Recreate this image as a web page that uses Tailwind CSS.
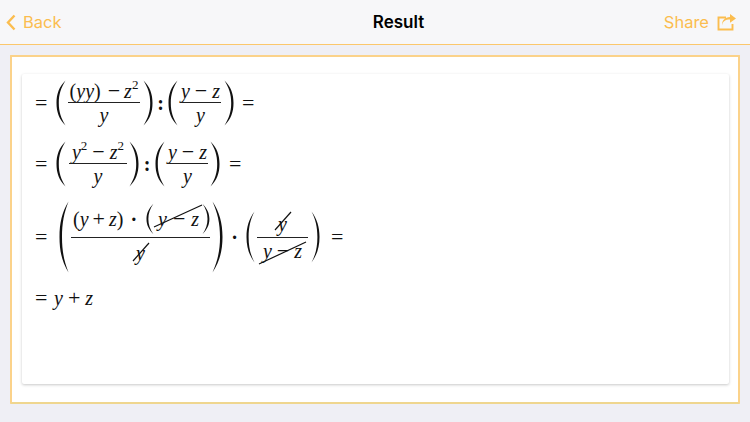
<!DOCTYPE html>
<html lang="en">
<head>
  <meta charset="UTF-8">
  <meta name="viewport" content="width=device-width, initial-scale=1.0">
  <script src="https://cdn.jsdelivr.net/npm/@tailwindcss/browser@4"></script>
  <title>Result</title>
</head>
<body class="bg-[#efeff5]">
  <div class="w-[750px] h-[422px] overflow-hidden flex flex-col font-['Inter','Liberation_Sans',sans-serif]">
    <!-- nav bar -->
    <div class="h-[45px] shrink-0 bg-[#f7f7f9] border-b border-[#fbc76c] flex items-center justify-between pl-[6px] pr-[13px] pt-[1px]">
      <div class="w-[204px] flex items-center gap-[7px] text-[#fbbd4f] text-[16.5px]">
        <svg width="10" height="17" viewBox="0 0 10 17" fill="none"><path d="M8.5 1.5 L2 8.5 L8.5 15.5" stroke="#fbbd4f" stroke-width="2.4"/></svg>
        <span>Back</span>
      </div>
      <div class="text-[17px] font-semibold text-black">Result</div>
      <div class="w-[150px] flex items-center justify-end gap-[8px] text-[#fbbd4f] text-[16.5px]">
        <span>Share</span>
        <svg width="20" height="17" viewBox="0 0 20 17" fill="none">
          <path d="M9 3.5 H1.5 V15.5 H15.5 V10" stroke="#fbbd4f" stroke-width="1.9"/>
          <path d="M5 11.5 C5.5 7.5 8.5 5.6 13 5.6 V8.8 L19 4.4 L13 0 V3 C8 3 4.8 6.5 5 11.5 Z" fill="#fbbd4f"/>
        </svg>
      </div>
    </div>

    <!-- outer card -->
    <div class="mt-[10px] ml-[10px] w-[730px] h-[349px] bg-white border-2 border-[#fbd28a] border-b-[#efd68f] rounded-[1px] pl-[10px] pt-[17px]">
      <!-- inner card -->
      <div class="w-[707px] h-[310px] bg-white rounded-[2px] shadow-[0_1px_3px_rgba(0,0,0,0.22)] pl-[13px] flex flex-col font-['Liberation_Serif',serif] text-[20px] leading-none text-[#111]">

        <!-- line 1 -->
        <div class="h-[46px] mt-[6px] flex items-center">
          <span class="w-[12px] text-center text-[22px]">=</span>
          <svg class="ml-[9px]" width="10" height="46" viewBox="0 0 10 46"><path d="M9.5 0.5 C3 7 0.5 14 0.5 23 C0.5 32 3 39 9.5 45.5 C5 38 2.8 32 2.8 23 C2.8 14 5 8 9.5 0.5 Z" fill="#111"/></svg>
          <div class="ml-[2px] w-[72px] flex flex-col items-center">
            <div class="h-[22px] flex items-center"><span>(<i>yy</i>)</span><span class="ml-[7px] text-[22px]">−</span><i class="ml-[4px]">z</i><sup class="text-[13px]">2</sup></div>
            <div class="w-full h-px bg-[#222]"></div>
            <i class="h-[23px] flex items-center">y</i>
          </div>
          <svg class="ml-[3px]" width="10" height="46" viewBox="0 0 10 46"><path d="M0.5 0.5 C7 7 9.5 14 9.5 23 C9.5 32 7 39 0.5 45.5 C5 38 7.2 32 7.2 23 C7.2 14 5 8 0.5 0.5 Z" fill="#111"/></svg>
          <span class="w-[15px] text-center font-bold">:</span>
          <svg width="10" height="46" viewBox="0 0 10 46"><path d="M9.5 0.5 C3 7 0.5 14 0.5 23 C0.5 32 3 39 9.5 45.5 C5 38 2.8 32 2.8 23 C2.8 14 5 8 9.5 0.5 Z" fill="#111"/></svg>
          <div class="ml-[2px] w-[41px] flex flex-col items-center">
            <div class="h-[22px] flex items-center"><i>y</i><span class="mx-[5px] text-[22px]">−</span><i>z</i></div>
            <div class="w-full h-px bg-[#222]"></div>
            <i class="h-[23px] flex items-center">y</i>
          </div>
          <svg class="ml-[3px]" width="10" height="46" viewBox="0 0 10 46"><path d="M0.5 0.5 C7 7 9.5 14 9.5 23 C9.5 32 7 39 0.5 45.5 C5 38 7.2 32 7.2 23 C7.2 14 5 8 0.5 0.5 Z" fill="#111"/></svg>
          <span class="ml-[8px] w-[12px] text-center text-[22px]">=</span>
        </div>

        <!-- line 2 -->
        <div class="h-[46px] mt-[15px] flex items-center">
          <span class="w-[12px] text-center text-[22px]">=</span>
          <svg class="ml-[9px]" width="10" height="46" viewBox="0 0 10 46"><path d="M9.5 0.5 C3 7 0.5 14 0.5 23 C0.5 32 3 39 9.5 45.5 C5 38 2.8 32 2.8 23 C2.8 14 5 8 9.5 0.5 Z" fill="#111"/></svg>
          <div class="ml-[3px] w-[58px] flex flex-col items-center">
            <div class="h-[22px] flex items-center"><i>y</i><sup class="text-[13px]">2</sup><span class="mx-[5px] text-[22px]">−</span><i>z</i><sup class="text-[13px]">2</sup></div>
            <div class="w-full h-px bg-[#222]"></div>
            <i class="h-[23px] flex items-center">y</i>
          </div>
          <svg class="ml-[2px]" width="10" height="46" viewBox="0 0 10 46"><path d="M0.5 0.5 C7 7 9.5 14 9.5 23 C9.5 32 7 39 0.5 45.5 C5 38 7.2 32 7.2 23 C7.2 14 5 8 0.5 0.5 Z" fill="#111"/></svg>
          <span class="w-[16px] text-center font-bold">:</span>
          <svg width="10" height="46" viewBox="0 0 10 46"><path d="M9.5 0.5 C3 7 0.5 14 0.5 23 C0.5 32 3 39 9.5 45.5 C5 38 2.8 32 2.8 23 C2.8 14 5 8 9.5 0.5 Z" fill="#111"/></svg>
          <div class="ml-[2px] w-[41px] flex flex-col items-center">
            <div class="h-[22px] flex items-center"><i>y</i><span class="mx-[5px] text-[22px]">−</span><i>z</i></div>
            <div class="w-full h-px bg-[#222]"></div>
            <i class="h-[23px] flex items-center">y</i>
          </div>
          <svg class="ml-[2px]" width="10" height="46" viewBox="0 0 10 46"><path d="M0.5 0.5 C7 7 9.5 14 9.5 23 C9.5 32 7 39 0.5 45.5 C5 38 7.2 32 7.2 23 C7.2 14 5 8 0.5 0.5 Z" fill="#111"/></svg>
          <span class="ml-[9px] w-[12px] text-center text-[22px]">=</span>
        </div>

        <!-- line 3 -->
        <div class="h-[74px] mt-[13px] flex items-center">
          <span class="w-[12px] text-center text-[22px]">=</span>
          <svg class="ml-[12px]" width="10" height="72" viewBox="0 0 10 72"><path d="M9.5 0.5 C3 11 0.5 22 0.5 36 C0.5 50 3 61 9.5 71.5 C5 60 3 50 3 36 C3 22 5 12 9.5 0.5 Z" fill="#111"/></svg>
          <div class="ml-[2px] w-[139px] flex flex-col items-center">
            <div class="w-full h-[36px] flex items-center pl-[2px]">
              <span>(<i>y</i><span class="mx-[4px] text-[22px]">+</span><i>z</i>)</span>
              <span class="ml-[7px] mr-[9px] font-bold">·</span>
              <svg width="8" height="32" viewBox="0 0 8 32"><path d="M7.5 0.5 C2.5 6 0.5 10 0.5 16 C0.5 22 2.5 26 7.5 31.5 C4 26 2.4 22 2.4 16 C2.4 10 4 6 7.5 0.5 Z" fill="#111"/></svg>
              <span class="relative flex items-center pl-[4px] pr-[3px]">
                <i>y</i><span class="mx-[6px] text-[22px]">−</span><i>z</i>
                <svg class="absolute -left-[1px] -top-[6px]" width="50" height="26" viewBox="0 0 50 26"><path d="M1 25 L49 3" stroke="#111" stroke-width="1.2"/></svg>
              </span>
              <svg width="8" height="32" viewBox="0 0 8 32"><path d="M0.5 0.5 C5.5 6 7.5 10 7.5 16 C7.5 22 5.5 26 0.5 31.5 C4 26 5.6 22 5.6 16 C5.6 10 4 6 0.5 0.5 Z" fill="#111"/></svg>
            </div>
            <div class="w-full h-px bg-[#222]"></div>
            <span class="relative h-[36px] flex items-center pb-[6px]">
              <i>y</i>
              <svg class="absolute -left-[4px] top-[4px]" width="18" height="20" viewBox="0 0 18 20"><path d="M1 19 L17 1" stroke="#111" stroke-width="1.2"/></svg>
            </span>
          </div>
          <svg class="ml-[2px]" width="11" height="72" viewBox="0 0 11 72"><path d="M0.5 0.5 C7.5 11 10.5 22 10.5 36 C10.5 50 7.5 61 0.5 71.5 C5.5 60 8 50 8 36 C8 22 5.5 12 0.5 0.5 Z" fill="#111"/></svg>
          <span class="w-[23px] text-center font-bold">·</span>
          <svg width="9" height="52" viewBox="0 0 9 52"><path d="M8.5 0.5 C3 8 0.5 16 0.5 26 C0.5 36 3 44 8.5 51.5 C4.5 44 2.6 36 2.6 26 C2.6 16 4.5 8 8.5 0.5 Z" fill="#111"/></svg>
          <div class="ml-[2px] w-[51px] flex flex-col items-center">
            <span class="relative h-[27px] flex items-center">
              <i>y</i>
              <svg class="absolute -left-[4px] top-[1px]" width="18" height="20" viewBox="0 0 18 20"><path d="M1 19 L17 1" stroke="#111" stroke-width="1.2"/></svg>
            </span>
            <div class="w-full h-px bg-[#222]"></div>
            <span class="relative h-[26px] flex items-center">
              <i>y</i><span class="mx-[5px] text-[22px]">−</span><i>z</i>
              <svg class="absolute -left-[5px] top-[3px]" width="49" height="24" viewBox="0 0 49 24"><path d="M1 23 L48 1" stroke="#111" stroke-width="1.2"/></svg>
            </span>
          </div>
          <svg class="ml-[3px]" width="9" height="52" viewBox="0 0 9 52"><path d="M0.5 0.5 C6 8 8.5 16 8.5 26 C8.5 36 6 44 0.5 51.5 C4.5 44 6.4 36 6.4 26 C6.4 16 4.5 8 0.5 0.5 Z" fill="#111"/></svg>
          <span class="ml-[11px] w-[12px] text-center text-[22px]">=</span>
        </div>

        <!-- line 4 -->
        <div class="h-[20px] mt-[14px] flex items-center">
          <span class="w-[12px] text-center text-[22px]">=</span>
          <i class="ml-[7px]">y</i>
          <span class="mx-[5px] text-[22px]">+</span>
          <i>z</i>
        </div>
      </div>
    </div>
  </div>
</body>
</html>
